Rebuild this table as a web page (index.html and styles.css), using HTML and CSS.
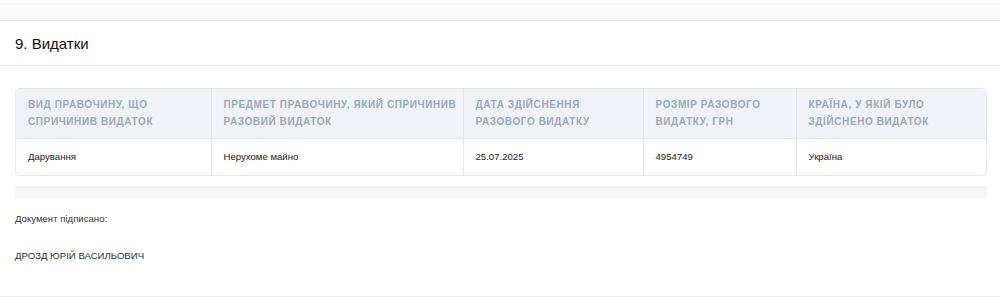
FILE: index.html
```html
<!DOCTYPE html>
<html lang="uk">
<head>
    <meta charset="UTF-8">
    <meta name="viewport" content="width=device-width, initial-scale=1.0">
    <title>Декларація - Видатки</title>
    <link rel="stylesheet" href="styles.css">
</head>
<body>

    <div class="top-strip"></div>

    <div class="section">
        <h2 class="section-title">9. Видатки</h2>

        <div class="section-body">
            <div class="table-wrap">
                <table class="data-table">
                    <colgroup>
                        <col class="col-1">
                        <col class="col-2">
                        <col class="col-3">
                        <col class="col-4">
                        <col class="col-5">
                    </colgroup>
                    <thead>
                        <tr>
                            <th>Вид правочину, що спричинив видаток</th>
                            <th>Предмет правочину, який спричинив разовий видаток</th>
                            <th>Дата здійснення разового видатку</th>
                            <th>Розмір разового видатку, грн</th>
                            <th>Країна, у якій було здійснено видаток</th>
                        </tr>
                    </thead>
                    <tbody>
                        <tr>
                            <td>Дарування</td>
                            <td>Нерухоме майно</td>
                            <td>25.07.2025</td>
                            <td>4954749</td>
                            <td>Україна</td>
                        </tr>
                    </tbody>
                </table>
            </div>
            <div class="scroll-track"></div>

            <div class="signature">
                <p class="signed-label">Документ підписано:</p>
                <p class="signed-name">ДРОЗД ЮРІЙ ВАСИЛЬОВИЧ</p>
            </div>
        </div>
    </div>

</body>
</html>
```

FILE: styles.css
```css
body {
    font-family: "Liberation Sans", Arial, sans-serif;
    background-color: #ffffff;
    color: #333;
    margin: 0;
    padding: 0;
}

.top-strip {
    height: 17px;
    background-color: #fafafa;
    border-top: 3px solid #ffffff;
    border-bottom: 1px solid #ececec;
}

.section {
    border-bottom: 1px solid #ececec;
}

.section-title {
    font-size: 15px;
    font-weight: 400;
    color: #111;
    margin: 0;
    padding: 14px 15px 13px;
    line-height: 17px;
    border-bottom: 1px solid #e6e6e6;
}

.section-body {
    padding: 22px 13px 34px 15px;
}

.table-wrap {
    border: 1px solid #e3e7ec;
    border-radius: 5px;
    overflow: hidden;
}

.data-table {
    width: 100%;
    border-collapse: collapse;
    table-layout: fixed;
    font-size: 9.6px;
}

.col-1 { width: 195px; }
.col-2 { width: 252px; }
.col-3 { width: 180px; }
.col-4 { width: 153px; }

.data-table th {
    background-color: #eff3f7;
    color: #9aa8bb;
    font-size: 10px;
    font-weight: 700;
    text-transform: uppercase;
    letter-spacing: 0.6px;
    text-align: left;
    vertical-align: top;
    padding: 7px 4px 8px 12px;
    line-height: 17px;
    border-bottom: 1px solid #e3e7ec;
}

.data-table td {
    color: #222;
    padding: 11px 12px 12px;
    line-height: 13px;
}

.data-table th + th,
.data-table td + td {
    border-left: 1px solid #e3e7ec;
}

.scroll-track {
    height: 10px;
    margin-top: 11px;
    background-color: #f6f6f6;
    border-top: 1px solid #e8e8e8;
}

.signature {
    padding-top: 14px;
    font-size: 9.6px;
}

.signed-label {
    margin: 0;
    line-height: 13px;
    color: #333;
}

.signed-name {
    margin: 24px 0 0;
    line-height: 13px;
    color: #2a2f3a;
}
```
